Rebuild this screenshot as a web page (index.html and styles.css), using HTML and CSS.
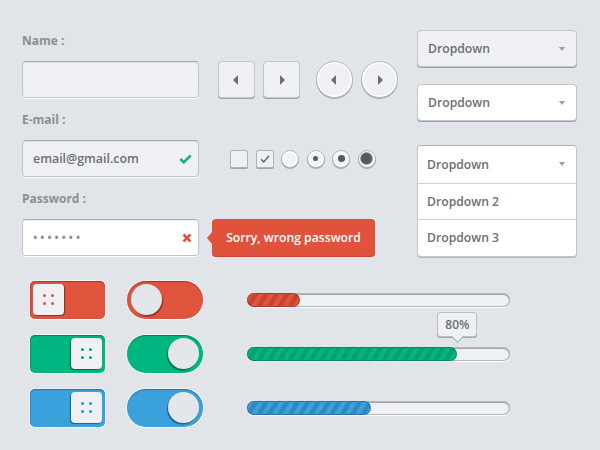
FILE: index.html
```html
<!DOCTYPE html>
<html>
<head>
<meta charset="utf-8">
<link rel="stylesheet" href="styles.css">
</head>
<body>
<div class="page">
  <div class="top">
    <div class="form">
      <div class="label row1">Name :</div>
      <div class="field row2"></div>
      <div class="arrows row2">
        <div class="sqbtn"><span class="tri-l"></span></div>
        <div class="sqbtn"><span class="tri-r"></span></div>
        <div class="circbtn first-circ"><span class="tri-l"></span></div>
        <div class="circbtn"><span class="tri-r"></span></div>
      </div>

      <div class="label row3">E-mail :</div>
      <div class="field row4">
        <span>email@gmail.com</span>
        <svg class="ico" width="13" height="10" viewBox="0 0 13 10"><path d="M1.3 5 L4.8 8.3 L11.7 1.5" fill="none" stroke="#17b47c" stroke-width="2.6" stroke-linejoin="miter"/></svg>
      </div>
      <div class="checks row4">
        <div class="cb"></div>
        <div class="cb"><svg width="12" height="10" viewBox="0 0 12 10"><path d="M2 5.2 L4.8 8 L10 1.8" fill="none" stroke="#5d6168" stroke-width="1.4"/></svg></div>
        <div class="radio"></div>
        <div class="radio"><span class="dot d1"></span></div>
        <div class="radio"><span class="dot d2"></span></div>
        <div class="radio"><span class="dot d3"></span></div>
      </div>

      <div class="label row5">Password :</div>
      <div class="field white row6">
        <span class="dots">•••••••</span>
        <svg class="ico" width="10" height="10" viewBox="0 0 10 10"><path d="M1.5 1.5 L8.5 8.5 M8.5 1.5 L1.5 8.5" fill="none" stroke="#e0523c" stroke-width="2.5"/></svg>
      </div>
      <div class="error row6">Sorry, wrong password</div>
    </div>

    <div class="dropdowns">
      <div class="dd grey"><span>Dropdown</span><span class="caret"></span></div>
      <div class="dd"><span>Dropdown</span><span class="caret"></span></div>
      <div class="dd-open">
        <div class="dd-item"><span>Dropdown</span><span class="caret"></span></div>
        <div class="dd-item"><span>Dropdown 2</span></div>
        <div class="dd-item"><span>Dropdown 3</span></div>
      </div>
    </div>
  </div>

  <div class="bottom">
    <div class="brow">
      <div class="tsq red"><div class="knob-sq kl"><span class="kd"></span><span class="kd"></span><span class="kd"></span><span class="kd"></span></div></div>
      <div class="trd red"><div class="knob-rd kl"></div></div>
      <div class="track"><div class="fill red" style="width:20%"></div></div>
    </div>
    <div class="brow">
      <div class="tsq green on"><div class="knob-sq kr"><span class="kd"></span><span class="kd"></span><span class="kd"></span><span class="kd"></span></div></div>
      <div class="trd green on"><div class="knob-rd kr"></div></div>
      <div class="track"><div class="fill green" style="width:80%"></div><div class="tip" style="left:80%">80%</div></div>
    </div>
    <div class="brow">
      <div class="tsq blue on"><div class="knob-sq kr"><span class="kd"></span><span class="kd"></span><span class="kd"></span><span class="kd"></span></div></div>
      <div class="trd blue on"><div class="knob-rd kr"></div></div>
      <div class="track"><div class="fill blue" style="width:47%"></div></div>
    </div>
  </div>
</div>
</body>
</html>
```

FILE: styles.css
```css
* { box-sizing: border-box; }
body {
  margin: 0;
  background: #e1e4e8;
  font-family: "Open Sans", "Liberation Sans", sans-serif;
}
.page {
  width: 600px;
  height: 450px;
  padding: 30px 0 0 22px;
}
.top { display: flex; align-items: flex-start; }

.form {
  display: grid;
  grid-template-columns: 177px 191px;
  grid-template-rows: 18px 37px 18px 37px 18px 37px;
  column-gap: 8px;
  row-gap: 12px;
  margin-top: 1px;
}
.row1 { grid-row: 1; }
.row2 { grid-row: 2; }
.row3 { grid-row: 3; }
.row4 { grid-row: 4; }
.row5 { grid-row: 5; }
.row6 { grid-row: 6; }

.label {
  grid-column: 1;
  font-size: 12px;
  font-weight: 700;
  color: #8b8f95;
  line-height: 20px;
}
.field {
  grid-column: 1;
  height: 37px;
  border: 1px solid #c0c3c8;
  border-top-color: #a6aaaf;
  border-radius: 4px;
  background: #eff0f3;
  box-shadow: inset 0 1px 1px rgba(0,0,0,0.07), 0 1px 0 #fff;
  display: flex;
  align-items: center;
  justify-content: space-between;
  padding: 0 6px 0 10px;
  font-size: 12.4px;
  font-weight: 600;
  color: #6b6f76;
}
.field.white { background: #fff; }
.dots {
  color: #8b8f95;
  font-size: 12px;
  letter-spacing: 2.6px;
}
.ico { display: block; }

.arrows {
  grid-column: 2;
  display: flex;
  gap: 8px;
  margin-left: 11px;
}
.sqbtn, .circbtn {
  width: 37px;
  height: 37px;
  background: #eff0f3;
  border: 1px solid #c3c6ca;
  box-shadow: 0 1px 0 #9ea2a7;
  display: flex;
  align-items: center;
  justify-content: center;
}
.sqbtn { border-radius: 4px; }
.circbtn {
  border-radius: 50%;
  border-color: #b5b9be;
  box-shadow: inset 0 0 0 1.5px #fff, 0 1px 0 #a3a7ac;
}
.first-circ { margin-left: 8px; }
.tri-l, .tri-r {
  width: 0;
  height: 0;
  border-top: 5px solid transparent;
  border-bottom: 5px solid transparent;
}
.tri-l { border-right: 5px solid #6b6f76; margin-right: 2px; }
.tri-r { border-left: 5px solid #6b6f76; margin-left: 2px; }

.checks {
  grid-column: 2;
  align-self: center;
  margin-left: 23px;
  display: flex;
  align-items: center;
  gap: 7.5px;
}
.cb {
  width: 18px;
  height: 18px;
  background: #eff0f3;
  border: 1px solid #b0b4b9;
  border-radius: 2px;
  box-shadow: 0 1px 0 #a3a7ac;
  display: flex;
  align-items: center;
  justify-content: center;
}
.radio {
  width: 18px;
  height: 18px;
  border-radius: 50%;
  background: #f1f2f4;
  border: 1px solid #b0b4b9;
  box-shadow: inset 0 0 0 1.5px #fff, 0 1px 0 #a3a7ac;
  display: flex;
  align-items: center;
  justify-content: center;
}
.dot { border-radius: 50%; background: #555960; display: block; }
.d1 { width: 5px; height: 5px; }
.d2 { width: 7px; height: 7px; }
.d3 { width: 11px; height: 11px; box-shadow: 0 0 0 1px #9a9ea3; }

.error {
  grid-column: 2;
  margin-left: 5px;
  width: 163px;
  height: 37px;
  background: #e0523c;
  border-radius: 4px;
  box-shadow: 0 1px 0 #c4412d;
  color: #fff;
  font-size: 12.2px;
  font-weight: 600;
  display: flex;
  align-items: center;
  justify-content: center;
  position: relative;
}
.error::before {
  content: "";
  position: absolute;
  left: -5px;
  top: 50%;
  margin-top: -6px;
  border-top: 6px solid transparent;
  border-bottom: 6px solid transparent;
  border-right: 5px solid #e0523c;
}

.dropdowns {
  margin-left: 19px;
  width: 160px;
  display: flex;
  flex-direction: column;
}
.dd {
  height: 37px;
  background: #fff;
  border: 1px solid #c3c6ca;
  border-radius: 4px;
  box-shadow: 0 1px 0 #9ea2a7;
  display: flex;
  align-items: center;
  justify-content: space-between;
  padding: 0 10px;
  font-size: 12.2px;
  font-weight: 600;
  color: #6b6f76;
  margin-bottom: 17px;
}
.dd.grey { background: #eff0f3; }
.dd + .dd { margin-bottom: 24px; }
.caret {
  width: 0;
  height: 0;
  border-left: 3.5px solid transparent;
  border-right: 3.5px solid transparent;
  border-top: 4px solid #9a9ea4;
  margin-right: 1px;
}
.dd-open {
  background: #fff;
  border: 1px solid #c3c6ca;
  border-top-color: #aeb2b7;
  border-radius: 4px;
  box-shadow: 0 1px 0 #b2b6bb;
}
.dd-item {
  height: 36.5px;
  display: flex;
  align-items: center;
  justify-content: space-between;
  padding: 0 10px 0 9px;
  font-size: 12.2px;
  font-weight: 600;
  color: #6b6f76;
}
.dd-item + .dd-item { border-top: 1px solid #cdd0d4; }

.bottom {
  margin-top: 24px;
  padding-left: 8px;
  display: flex;
  flex-direction: column;
  gap: 16px;
}
.brow {
  display: flex;
  align-items: center;
}
.red { background-color: #e0533d; }
.green { background-color: #00b680; }
.blue { background-color: #3ba1dc; }

.tsq {
  width: 75px;
  height: 38px;
  border-radius: 5px;
  box-shadow: inset 0 1px 1px rgba(0,0,0,0.28), inset 1px 0 0 rgba(0,0,0,0.12), 0 1px 0 #fff, 0 0 0 1px rgba(255,255,255,0.5);
  display: flex;
  align-items: center;
  padding: 0 3px;
}
.tsq.on { justify-content: flex-end; }
.knob-sq {
  width: 31px;
  height: 31px;
  border-radius: 4px;
  background: #eff0f3;
  display: grid;
  grid-template-columns: 3px 3px;
  grid-template-rows: 3px 3px;
  gap: 5px;
  align-content: center;
  justify-content: center;
}
.knob-sq.kl { box-shadow: 1px 1px 1px rgba(0,0,0,0.4); }
.knob-sq.kr { box-shadow: -1px 1px 1px rgba(0,0,0,0.4); }
.kd { width: 3px; height: 3px; border-radius: 50%; }
.red .kd { background: #e0533d; }
.green .kd { background: #00a070; }
.blue .kd { background: #2f8fcc; }

.trd {
  width: 76px;
  height: 38px;
  border-radius: 19px;
  margin-left: 22px;
  box-shadow: inset 0 1px 1px rgba(0,0,0,0.3), 0 1px 0 #fff, 0 0 0 1px rgba(255,255,255,0.5);
  display: flex;
  align-items: center;
  padding: 0 4px;
}
.trd.on { justify-content: flex-end; }
.knob-rd {
  width: 31px;
  height: 31px;
  border-radius: 50%;
  background: #e3e6ea;
}
.knob-rd.kl { box-shadow: 1px 1.5px 1px rgba(0,0,0,0.4); }
.knob-rd.kr { box-shadow: -1px 1.5px 1px rgba(0,0,0,0.4); }

.track {
  position: relative;
  margin-left: 44px;
  width: 263px;
  height: 14px;
  border-radius: 7px;
  background: #eff0f3;
  box-shadow: inset 0 0 0 1px #b5b9be, inset 0 1px 0 1px #a3a7ac, 0 1px 0 #fff;
}
.fill {
  height: 14px;
  border-radius: 7px;
  border: 1px solid rgba(0,0,0,0.2);
}
.fill.red { background-image: repeating-linear-gradient(120deg, #e0533d 0 4.5px, #c5452f 4.5px 9px); }
.fill.green { background-image: repeating-linear-gradient(120deg, #00b680 0 4.5px, #06a06f 4.5px 9px); }
.fill.blue { background-image: repeating-linear-gradient(120deg, #3ba1dc 0 4.5px, #2f88bf 4.5px 9px); }

.tip {
  position: absolute;
  bottom: calc(100% + 10px);
  transform: translateX(-50%);
  width: 40px;
  height: 25px;
  background: #eff0f3;
  border: 1px solid #b9bdc2;
  border-radius: 3px;
  box-shadow: 0 1px 0 #a3a7ac;
  font-size: 12px;
  font-weight: 600;
  color: #6b6f76;
  display: flex;
  align-items: center;
  justify-content: center;
}
.tip::after {
  content: "";
  position: absolute;
  left: 50%;
  bottom: -5px;
  width: 8px;
  height: 8px;
  margin-left: -4px;
  background: #eff0f3;
  border-right: 1px solid #a3a7ac;
  border-bottom: 1px solid #a3a7ac;
  transform: rotate(45deg);
}
```
